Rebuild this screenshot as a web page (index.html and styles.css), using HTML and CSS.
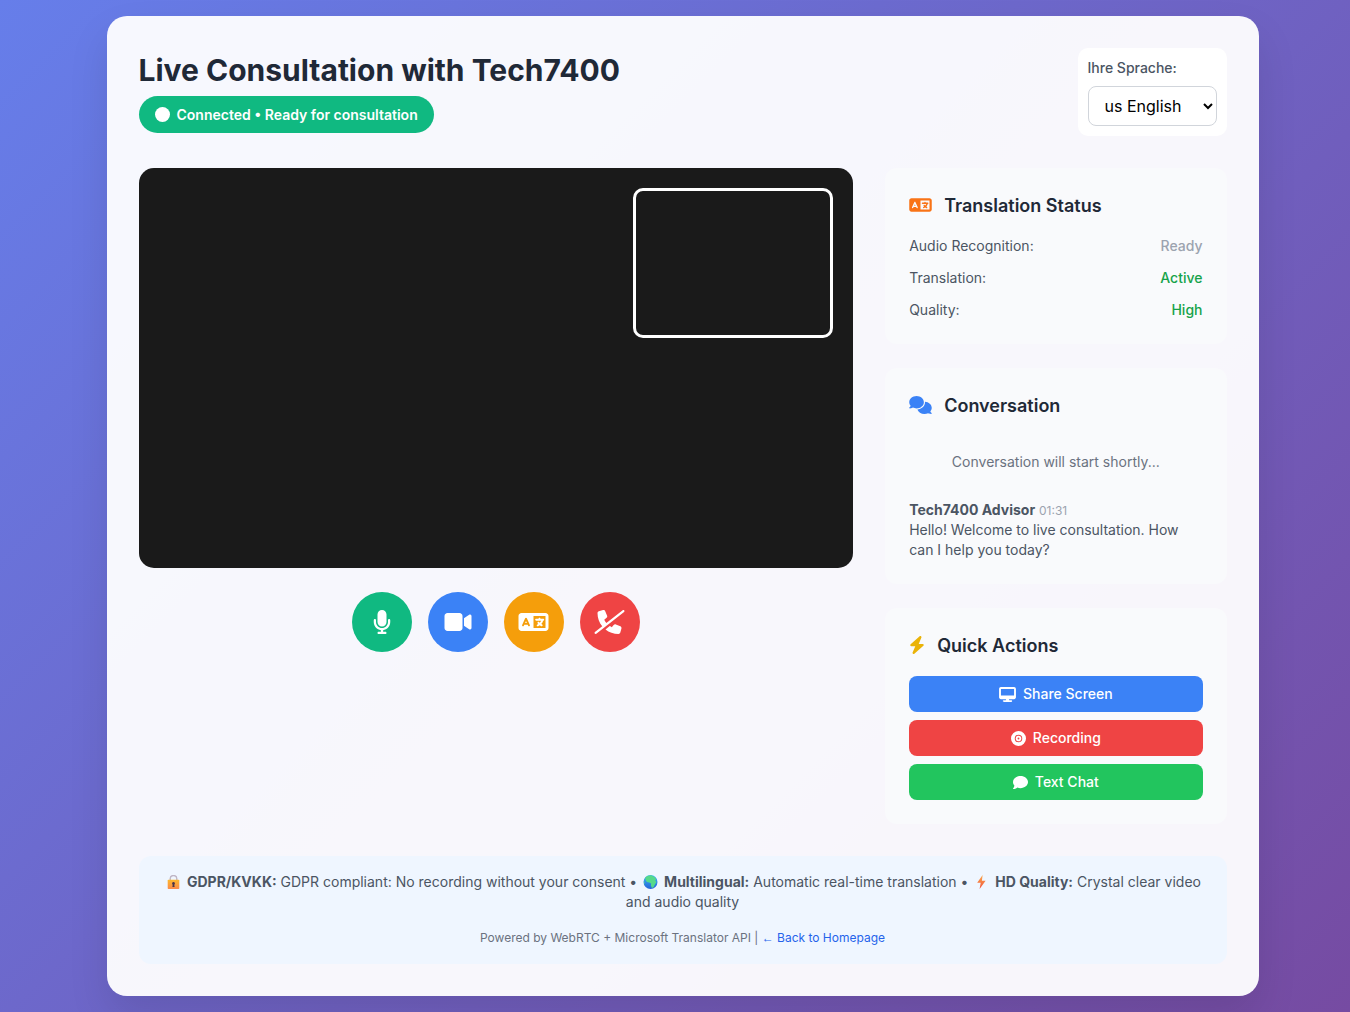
FILE: index.html
```html
<!DOCTYPE html>
<html lang="en">
<head>
<meta charset="utf-8">
<meta name="viewport" content="width=device-width, initial-scale=1">
<title>Live Consultation with Tech7400</title>
<link rel="stylesheet" href="styles.css">
</head>
<body>
<svg class="defs" aria-hidden="true">
  <defs>
    <linearGradient id="gold" x1="0" y1="0" x2="0" y2="1"><stop offset="0" stop-color="#fdb82c"/><stop offset="1" stop-color="#fb8b4b"/></linearGradient>
    <linearGradient id="sea" x1="0" y1="0" x2="0" y2="1"><stop offset="0" stop-color="#3ab8f5"/><stop offset="1" stop-color="#2563d8"/></linearGradient>
    <linearGradient id="flame" x1="0" y1="0" x2="0" y2="1"><stop offset="0" stop-color="#fbab4b"/><stop offset="1" stop-color="#f0503c"/></linearGradient>
  </defs>
  <symbol id="language" viewBox="0 0 640 512"><path d="M0 128C0 92.7 28.7 64 64 64H256h48 16H576c35.3 0 64 28.7 64 64V384c0 35.3-28.7 64-64 64H320 304 256 64c-35.3 0-64-28.7-64-64V128zm320 0V384H576V128H320zM178.3 175.9c-3.2-7.2-10.4-11.9-18.3-11.9s-15.1 4.7-18.3 11.9l-64 144c-4.5 10.1 .1 21.9 10.2 26.4s21.9-.1 26.4-10.2l8.9-20.1h73.6l8.9 20.1c4.5 10.1 16.3 14.6 26.4 10.2s14.6-16.3 10.2-26.4l-64-144zM160 233.2L179 276H141l19-42.8zM448 164c11 0 20 9 20 20v4h44 16c11 0 20 9 20 20s-9 20-20 20h-2l-1.6 4.5c-8.9 24.4-22.4 46.6-39.6 65.4c.9 .6 1.8 1.1 2.7 1.6l18.9 11.3c9.5 5.7 12.5 18 6.9 27.4s-18 12.5-27.4 6.9l-18.9-11.3c-4.5-2.7-8.8-5.5-13.1-8.5c-10.6 7.5-21.9 14-34 19.4l-3.6 1.6c-10.1 4.5-21.9-.1-26.4-10.2s.1-21.9 10.2-26.4l3.6-1.6c6.4-2.9 12.6-6.1 18.5-9.8l-12.2-12.2c-7.8-7.8-7.8-20.5 0-28.3s20.5-7.8 28.3 0l14.6 14.6 .5 .5c12.4-13.1 22.5-28.3 29.8-45H448 376c-11 0-20-9-20-20s9-20 20-20h52v-4c0-11 9-20 20-20z"/></symbol>
</svg>
<main class="card">
  <header class="top">
    <div>
      <h1 class="title">Live Consultation with Tech7400</h1>
      <div class="status">
        <svg class="icon-sm" viewBox="0 0 512 512" aria-hidden="true"><circle cx="256" cy="256" r="256"/></svg>
        <span>Connected • Ready for consultation</span>
      </div>
    </div>
    <div class="lang">
      <label class="lang-label" for="lang">Ihre Sprache:</label>
      <select class="lang-select" id="lang"><option>us English</option></select>
    </div>
  </header>

  <div class="columns">
    <section class="call">
      <div class="video"><div class="preview"></div></div>
      <div class="controls">
        <button class="round green" type="button" aria-label="Microphone"><svg class="icon-mic" viewBox="0 0 384 512"><path d="M192 0C139 0 96 43 96 96V256c0 53 43 96 96 96s96-43 96-96V96c0-53-43-96-96-96zM64 216c0-13.3-10.7-24-24-24s-24 10.7-24 24v40c0 89.1 66.2 162.7 152 174.4V464H120c-13.3 0-24 10.7-24 24s10.7 24 24 24h72 72c13.3 0 24-10.7 24-24s-10.7-24-24-24H216V430.4c85.8-11.7 152-85.3 152-174.4V216c0-13.3-10.7-24-24-24s-24 10.7-24 24v40c0 70.7-57.3 128-128 128s-128-57.3-128-128V216z"/></svg></button>
        <button class="round blue" type="button" aria-label="Camera"><svg class="icon-cam" viewBox="0 0 576 512"><path d="M0 128C0 92.7 28.7 64 64 64H320c35.3 0 64 28.7 64 64V384c0 35.3-28.7 64-64 64H64c-35.3 0-64-28.7-64-64V128zM559.1 99.8c10.4 5.6 16.9 16.4 16.9 28.2V384c0 11.8-6.5 22.6-16.9 28.2s-23 5-32.9-1.6l-96-64L416 337.1V320 192 174.9l14.2-9.5 96-64c9.8-6.5 22.4-7.2 32.9-1.6z"/></svg></button>
        <button class="round amber" type="button" aria-label="Translation"><svg class="icon-wide"><use href="#language"/></svg></button>
        <button class="round red" type="button" aria-label="End call"><svg class="icon-wide" viewBox="0 0 640 512"><path d="M228.9 24.6c-7.7-18.6-28-28.5-47.4-23.2l-88 24C76.1 30.2 64 46 64 64c0 107.4 37.8 206 100.8 283.1L9.2 469.1c-10.4 8.2-12.3 23.3-4.1 33.7s23.3 12.3 33.7 4.1l592-464c10.4-8.2 12.3-23.3 4.1-33.7s-23.3-12.3-33.7-4.1L253 278c-17.8-21.5-32.9-45.2-45-70.7L257.3 167c13.7-11.2 18.4-30 11.6-46.3l-40-96zm96.8 319l-91.3 72C310.7 476 407.1 512 512 512c18 0 33.8-12.1 38.6-29.5l24-88c5.3-19.4-4.6-39.7-23.2-47.4l-96-40c-16.3-6.8-35.2-2.1-46.3 11.6L368.7 368c-15-7.1-29.3-15.2-43-24.3z"/></svg></button>
      </div>
    </section>

    <aside class="side">
      <section class="panel">
        <h2 class="panel-title"><svg class="icon-head orange-ink"><use href="#language"/></svg>Translation Status</h2>
        <dl class="stats">
          <div class="stat"><dt>Audio Recognition:</dt><dd class="muted">Ready</dd></div>
          <div class="stat"><dt>Translation:</dt><dd>Active</dd></div>
          <div class="stat"><dt>Quality:</dt><dd>High</dd></div>
        </dl>
      </section>

      <section class="panel">
        <h2 class="panel-title"><svg class="icon-head blue-ink" viewBox="0 0 640 512" aria-hidden="true"><path d="M208 352c114.9 0 208-78.8 208-176S322.9 0 208 0S0 78.8 0 176c0 38.6 14.7 74.3 39.6 103.4c-3.5 9.4-8.7 17.7-14.2 24.7c-4.8 6.2-9.7 11-13.3 14.3c-1.8 1.6-3.3 2.9-4.3 3.7c-.5 .4-.9 .7-1.1 .8l-.2 .2C1 327.2-1.4 334.4 .8 340.9S9.1 352 16 352c21.8 0 43.8-5.6 62.1-12.5c9.2-3.5 17.8-7.4 25.3-11.4C134.1 343.3 169.8 352 208 352zM448 176c0 112.3-99.1 196.9-216.5 207C255.8 457.4 336.4 512 432 512c38.2 0 73.9-8.7 104.7-23.9c7.5 4 16 7.9 25.2 11.4c18.3 6.9 40.3 12.5 62.1 12.5c6.9 0 13.1-4.5 15.2-11.1c2.1-6.6-.2-13.8-5.8-17.9l-.2-.2c-.2-.2-.6-.4-1.1-.8c-1-.8-2.5-2-4.3-3.7c-3.6-3.3-8.5-8.1-13.3-14.3c-5.5-7-10.7-15.4-14.2-24.7c24.9-29 39.6-64.7 39.6-103.4c0-92.8-84.9-168.9-192.6-175.5c.4 5.1 .6 10.3 .6 15.5z"/></svg>Conversation</h2>
        <p class="notice">Conversation will start shortly...</p>
        <div class="message">
          <strong>Tech7400 Advisor</strong> <time class="time">01:31</time>
          <p>Hello! Welcome to live consultation. How can I help you today?</p>
        </div>
      </section>

      <section class="panel">
        <h2 class="panel-title"><svg class="icon-bolt" viewBox="0 0 448 512" aria-hidden="true"><path d="M349.4 44.6c5.9-13.7 1.5-29.7-10.6-38.5s-28.6-8-39.9 1.8l-256 224c-10 8.8-13.6 22.9-8.9 35.3S50.7 288 64 288H175.5L98.6 467.4c-5.9 13.7-1.5 29.7 10.6 38.5s28.6 8 39.9-1.8l256-224c10-8.8 13.6-22.9 8.9-35.3s-16.6-20.7-30-20.7H272.5L349.4 44.6z"/></svg>Quick Actions</h2>
        <div class="actions">
          <button class="action blue" type="button"><svg class="icon-desk" viewBox="0 0 576 512" aria-hidden="true"><path d="M64 0C28.7 0 0 28.7 0 64V352c0 35.3 28.7 64 64 64H240l-10.7 32H160c-17.7 0-32 14.3-32 32s14.3 32 32 32H416c17.7 0 32-14.3 32-32s-14.3-32-32-32H346.7L336 416H512c35.3 0 64-28.7 64-64V64c0-35.3-28.7-64-64-64H64zM512 64V288H64V64H512z"/></svg>Share Screen</button>
          <button class="action red" type="button"><svg class="icon-sm" viewBox="0 0 512 512" aria-hidden="true"><path d="M0 256a256 256 0 1 1 512 0A256 256 0 1 1 0 256zm256-96a96 96 0 1 1 0 192 96 96 0 1 1 0-192zm0 224a128 128 0 1 0 0-256 128 128 0 1 0 0 256zm0-96a32 32 0 1 0 0-64 32 32 0 1 0 0 64z"/></svg>Recording</button>
          <button class="action lime" type="button"><svg class="icon-sm" viewBox="0 0 512 512" aria-hidden="true"><path d="M512 240c0 114.9-114.6 208-256 208c-37.1 0-72.3-6.4-104.1-17.9c-11.9 8.7-31.3 20.6-54.3 30.6C73.6 471.1 44.7 480 16 480c-6.5 0-12.3-3.9-14.8-9.9c-2.5-6-1.1-12.8 3.4-17.4l.3-.3c.3-.3 .7-.7 1.3-1.4c1.1-1.2 2.8-3.1 4.9-5.7c4.1-5 9.6-12.4 15.2-21.6c10-16.6 19.5-38.4 21.4-62.9C17.7 326.8 0 285.1 0 240C0 125.1 114.6 32 256 32s256 93.1 256 208z"/></svg>Text Chat</button>
        </div>
      </section>
    </aside>
  </div>

  <footer class="foot">
    <p>
      <svg class="emoji" viewBox="0 0 19 14" aria-hidden="true"><path d="M6.2 5.5V3.8a3.3 3.3 0 0 1 6.6 0v1.7" fill="none" stroke="#bfb6c6" stroke-width="1.4"/><rect x="3.7" y="4.8" width="11.6" height="9.2" rx=".8" fill="url(#gold)"/><path d="M9.5 7a1.5 1.5 0 0 1 .8 2.7l.3 2.2H8.4l.3-2.2A1.5 1.5 0 0 1 9.5 7z" fill="#4a3548"/></svg>
      <strong>GDPR/KVKK:</strong> GDPR compliant: No recording without your consent •
      <svg class="emoji" viewBox="0 0 19 14" aria-hidden="true"><circle cx="9.5" cy="7" r="7" fill="url(#sea)"/><path d="M4.3 2.6C6 .9 8.2.2 10.300.2l1.600 1 1.800.8 1.400 2.200-.9 1.500 1.300 1.300-1.600 2.600-1.300 2.600-1.700.7-1-2.300.2-2.100-1.900-1-2.300-.4-1.400-2.100z" fill="#55d98a"/><path d="M2.800 6l1.200 1.500-.5 2z" fill="#45c79a"/></svg>
      <strong>Multilingual:</strong> Automatic real-time translation •
      <svg class="emoji" viewBox="0 0 19 14" aria-hidden="true"><path d="M10.600 0L5.200 7.800h3.500L7.600 14l6-8.200h-3.700z" fill="url(#flame)"/></svg>
      <strong>HD Quality:</strong> Crystal clear video and audio quality
    </p>
    <p class="powered">Powered by WebRTC + Microsoft Translator API | <a class="link" href="#"><span class="arrow">←</span> Back to Homepage</a></p>
  </footer>
</main>
</body>
</html>
```
FILE: styles.css
```css
* { box-sizing: border-box; }
body {
  margin: 0;
  padding: 16px 0 16px 15px;
  min-height: 100vh;
  background: linear-gradient(135deg, #667eea 0%, #764ba2 100%);
  font-family: Inter, "Liberation Sans", sans-serif;
  font-size: 14px;
  line-height: 20px;
  color: #4b5563;
}
h1, h2, p, dl, dd { margin: 0; }
svg { fill: currentColor; flex-shrink: 0; }
button { border: 0; padding: 0; font: inherit; color: #fff; cursor: pointer; }
.defs { position: absolute; width: 0; height: 0; }

.card {
  max-width: 1152px;
  margin: 0 auto;
  padding: 32px;
  border-radius: 20px;
  background: rgba(255, 255, 255, 0.95);
  box-shadow: 0 20px 40px rgba(0, 0, 0, 0.1);
}
.top { display: flex; justify-content: space-between; align-items: center; margin-bottom: 32px; }
.title { margin-bottom: 8px; font-size: 30px; line-height: 36px; font-weight: 700; color: #1f2937; }
.status {
  display: inline-flex;
  align-items: center;
  gap: 7px;
  padding: 8px 16px;
  border-radius: 20px;
  background: #10b981;
  color: #fff;
  font-weight: 600;
  line-height: 21px;
}
.lang { padding: 10px; border-radius: 10px; background: #fff; }
.lang-label { display: block; margin-bottom: 8px; font-weight: 500; color: #4b5563; }
.lang-select {
  display: block;
  width: 129px;
  height: 40px;
  padding: 8px 12px;
  border: 1px solid #d1d5db;
  border-radius: 8px;
  background: #fff;
  font: 400 16px/24px Inter, sans-serif;
  color: #000;
}

.columns { display: grid; grid-template-columns: repeat(3, 1fr); gap: 32px; }
.call { grid-column: span 2; }
.video {
  display: flex;
  justify-content: flex-end;
  align-items: flex-start;
  height: 400px;
  padding: 20px;
  border-radius: 15px;
  background: #1a1a1a;
}
.preview { width: 200px; height: 150px; border: 3px solid #fff; border-radius: 10px; }
.controls { display: flex; justify-content: center; gap: 16px; margin-top: 24px; }
.round { display: grid; place-items: center; width: 60px; height: 60px; border-radius: 50%; }
.green { background: #10b981; }
.blue { background: #3b82f6; }
.amber { background: #f59e0b; }
.red { background: #ef4444; }
.lime { background: #22c55e; }

.side { display: flex; flex-direction: column; gap: 24px; }
.panel { padding: 24px; border-radius: 12px; background: #f9fafc; }
.panel-title {
  display: flex;
  align-items: center;
  gap: 12px;
  margin-bottom: 16px;
  font-size: 18px;
  line-height: 28px;
  font-weight: 600;
  color: #1f2937;
}
.panel-title svg { margin-bottom: 2px; }
.stats { display: grid; gap: 12px; }
.stat { display: flex; justify-content: space-between; }
.stat dd { font-weight: 500; color: #16a34a; }
.stat .muted { color: #9ca3af; }
.notice { padding: 16px; text-align: center; color: #6b7280; }
.message { margin-top: 12px; }
.time { font-size: 12px; line-height: 16px; color: #9ca3af; }
.actions { display: grid; gap: 8px; }
.action {
  display: flex;
  align-items: center;
  justify-content: center;
  gap: 7px;
  padding: 8px 16px;
  border-radius: 8px;
  font-weight: 500;
}

.icon-sm { width: 15px; height: 15px; }
.icon-desk { width: 17px; height: 15px; }
.icon-mic { width: 18px; height: 24px; }
.icon-cam { width: 28px; height: 24px; }
.icon-wide { width: 31px; height: 24px; }
.icon-head { width: 23px; height: 18px; }
.icon-bolt { width: 16px; height: 18px; color: #eab308; }
.orange-ink { color: #f97316; }
.blue-ink { color: #3b82f6; }

.foot {
  margin-top: 32px;
  padding: 16px;
  border-radius: 12px;
  background: #eff6ff;
  text-align: center;
}
.emoji { width: 19px; height: 14px; vertical-align: -2px; }
.powered { margin-top: 16px; font-size: 12px; color: #6b7280; }
.link { color: #2563eb; text-decoration: none; }
.arrow { font-family: "Liberation Sans", sans-serif; line-height: 12px; }
```
